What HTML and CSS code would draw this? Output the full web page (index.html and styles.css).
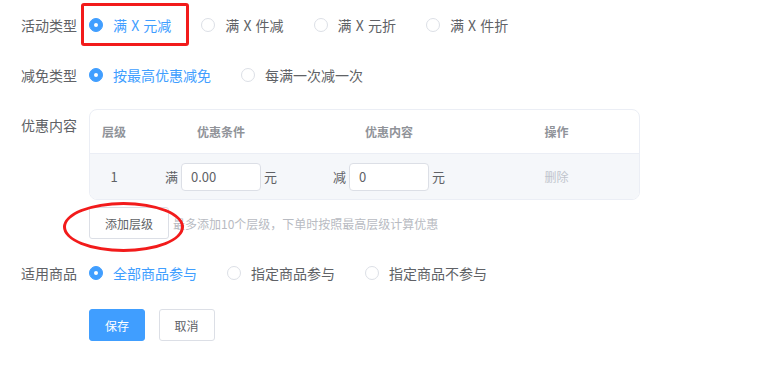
FILE: index.html
```html
<!DOCTYPE html>
<html lang="zh-CN">
<head>
    <meta charset="UTF-8">
    <meta name="viewport" content="width=device-width, initial-scale=1.0">
    <title>满减活动</title>
    <link rel="stylesheet" href="styles.css">
</head>
<body>
    <form class="promo-form">
        <div class="form-item">
            <div class="form-label">活动类型</div>
            <div class="form-content radio-group">
                <label class="radio is-checked"><span class="radio-dot"></span>满 X 元减</label>
                <label class="radio"><span class="radio-dot"></span>满 X 件减</label>
                <label class="radio"><span class="radio-dot"></span>满 X 元折</label>
                <label class="radio"><span class="radio-dot"></span>满 X 件折</label>
            </div>
            <div class="mark-box"></div>
        </div>

        <div class="form-item">
            <div class="form-label">减免类型</div>
            <div class="form-content radio-group">
                <label class="radio is-checked"><span class="radio-dot"></span>按最高优惠减免</label>
                <label class="radio"><span class="radio-dot"></span>每满一次减一次</label>
            </div>
        </div>

        <div class="form-item">
            <div class="form-label">优惠内容</div>
            <div class="form-content">
                <div class="level-table">
                    <div class="level-row level-head">
                        <div class="cell">层级</div>
                        <div class="cell">优惠条件</div>
                        <div class="cell">优惠内容</div>
                        <div class="cell">操作</div>
                    </div>
                    <div class="level-row level-body">
                        <div class="cell">1</div>
                        <div class="cell">
                            <span class="unit">满</span>
                            <input class="text-input" type="text" value="0.00">
                            <span class="unit">元</span>
                        </div>
                        <div class="cell">
                            <span class="unit">减</span>
                            <input class="text-input" type="text" value="0">
                            <span class="unit">元</span>
                        </div>
                        <div class="cell"><span class="link-disabled">删除</span></div>
                    </div>
                </div>
                <div class="add-level">
                    <button type="button" class="btn">添加层级</button>
                    <span class="hint">最多添加10个层级，下单时按照最高层级计算优惠</span>
                    <div class="mark-ellipse"></div>
                </div>
            </div>
        </div>

        <div class="form-item">
            <div class="form-label">适用商品</div>
            <div class="form-content radio-group">
                <label class="radio is-checked"><span class="radio-dot"></span>全部商品参与</label>
                <label class="radio"><span class="radio-dot"></span>指定商品参与</label>
                <label class="radio"><span class="radio-dot"></span>指定商品不参与</label>
            </div>
        </div>

        <div class="form-item form-actions">
            <div class="form-label"></div>
            <div class="form-content">
                <button type="button" class="btn btn-primary">保存</button>
                <button type="button" class="btn">取消</button>
            </div>
        </div>
    </form>
</body>
</html>
```

FILE: styles.css
```css
body {
    margin: 0;
    font-family: "Noto Sans CJK SC", "Noto Sans", sans-serif;
    color: #606266;
    background-color: #ffffff;
}

.promo-form {
    padding: 9px 0 0 9px;
}

.form-item {
    position: relative;
    display: flex;
    margin-bottom: 18px;
}

.form-label {
    width: 80px;
    flex-shrink: 0;
    box-sizing: border-box;
    padding-right: 12px;
    text-align: right;
    font-size: 14px;
    line-height: 32px;
    color: #606266;
}

.form-content {
    flex: 1;
}

/* Radio buttons */
.radio-group {
    display: flex;
    align-items: center;
    height: 32px;
}

.radio {
    display: flex;
    align-items: center;
    margin-right: 30px;
    font-size: 14px;
    word-spacing: 1px;
    color: #606266;
    white-space: pre;
    cursor: pointer;
}

.radio-dot {
    position: relative;
    width: 14px;
    height: 14px;
    box-sizing: border-box;
    border: 1px solid #dcdfe6;
    border-radius: 50%;
    margin-right: 10px;
    background: #ffffff;
}

.radio.is-checked {
    color: #409eff;
}

.radio.is-checked .radio-dot {
    background: #409eff;
    border-color: #409eff;
}

.radio.is-checked .radio-dot:after {
    content: "";
    position: absolute;
    width: 4px;
    height: 4px;
    left: 4px;
    top: 4px;
    border-radius: 50%;
    background: #ffffff;
}

/* Levels table */
.level-table {
    width: 549px;
    border: 1px solid #ebeef5;
    border-radius: 8px;
    overflow: hidden;
    font-size: 12px;
}

.level-row {
    display: grid;
    grid-template-columns: 48px 166px 170px 1fr;
    align-items: center;
}

.level-head {
    height: 43px;
    font-weight: bold;
    color: #909399;
    border-bottom: 1px solid #ebeef5;
}

.level-body {
    height: 45px;
    background: #f5f7fa;
    font-size: 13px;
}

.cell {
    display: flex;
    align-items: center;
    justify-content: center;
}

.unit {
    color: #606266;
}

.text-input {
    width: 80px;
    height: 28px;
    box-sizing: border-box;
    margin: 0 3px;
    padding: 0 9px;
    border: 1px solid #dcdfe6;
    border-radius: 4px;
    font-family: inherit;
    font-size: 13px;
    color: #606266;
    background: #ffffff;
    outline: none;
}

.link-disabled {
    font-size: 12px;
    color: #c0c4cc;
}

.add-level {
    position: relative;
    display: flex;
    align-items: center;
    margin-top: 7px;
}

.hint {
    margin-left: 4px;
    font-size: 12px;
    color: #b8bbc2;
}

/* Buttons */
.btn {
    height: 32px;
    padding: 0 15px;
    border: 1px solid #dcdfe6;
    border-radius: 3px;
    background: #ffffff;
    font-family: inherit;
    font-size: 12px;
    color: #606266;
    cursor: pointer;
}

.btn + .btn {
    margin-left: 10px;
}

.btn-primary {
    background: #409eff;
    border-color: #409eff;
    color: #ffffff;
}

.form-actions {
    margin-top: 20px;
}

/* Red annotation marks */
.mark-box {
    position: absolute;
    left: 72px;
    top: -6px;
    width: 108px;
    height: 43px;
    box-sizing: border-box;
    border: 3px solid #f21b1b;
    border-radius: 3px;
    pointer-events: none;
}

.mark-ellipse {
    position: absolute;
    left: -26px;
    top: -5px;
    width: 121px;
    height: 50px;
    box-sizing: border-box;
    border: 3px solid #f21b1b;
    border-radius: 50%;
    pointer-events: none;
}
```
